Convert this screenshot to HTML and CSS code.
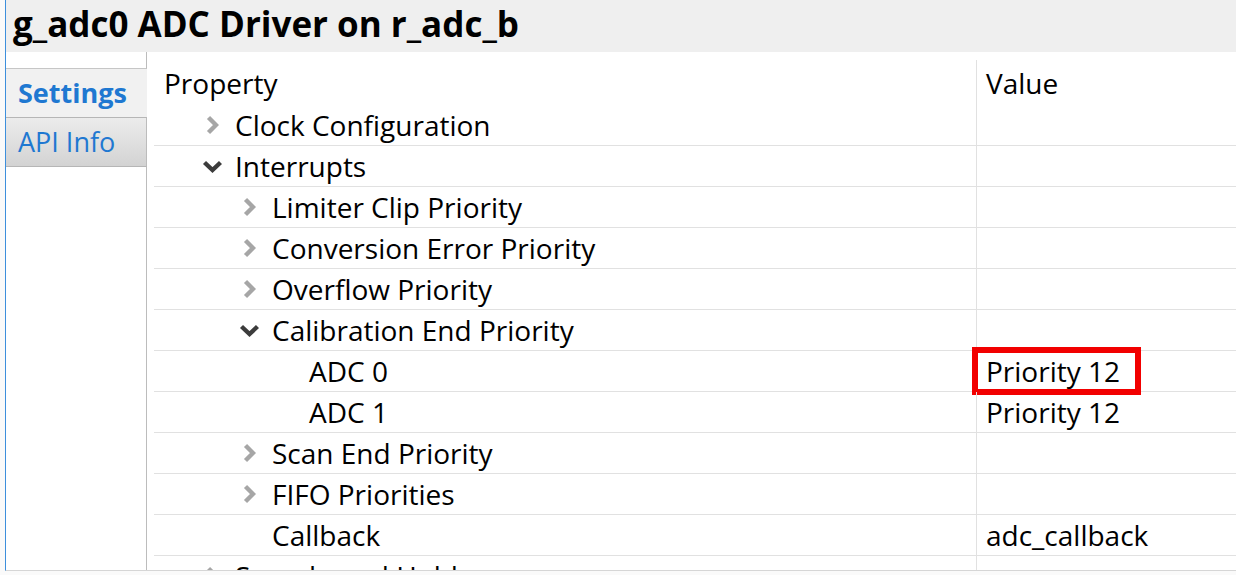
FILE: index.html
```html
<!DOCTYPE html>
<html>
<head>
<meta charset="utf-8">
<link rel="stylesheet" href="styles.css">
</head>
<body>
<div class="window">
  <div class="title">g_adc0 ADC Driver on r_adc_b</div>
  <div class="main">
    <nav class="tabs">
      <div class="tab-gap"></div>
      <div class="tab active">Settings</div>
      <div class="tab">API Info</div>
      <div class="tab-fill"></div>
    </nav>
    <div class="grid">
      <div class="row head"><div class="cell prop hdr">Property</div><div class="cell val">Value</div></div>
      <div class="row"><div class="cell prop l1"><span class="twist"><svg class="chev-r" width="13" height="20" viewBox="0 0 13 20"><polyline points="2.5,2.5 10,10 2.5,17.5"/></svg></span>Clock Configuration</div><div class="cell val"></div></div>
      <div class="row"><div class="cell prop l1"><span class="twist"><svg class="chev-d" width="21" height="13" viewBox="0 0 21 13"><polyline points="2.5,2.5 10.5,10 18.5,2.5"/></svg></span>Interrupts</div><div class="cell val"></div></div>
      <div class="row"><div class="cell prop l2"><span class="twist"><svg class="chev-r" width="13" height="20" viewBox="0 0 13 20"><polyline points="2.5,2.5 10,10 2.5,17.5"/></svg></span>Limiter Clip Priority</div><div class="cell val"></div></div>
      <div class="row"><div class="cell prop l2"><span class="twist"><svg class="chev-r" width="13" height="20" viewBox="0 0 13 20"><polyline points="2.5,2.5 10,10 2.5,17.5"/></svg></span>Conversion Error Priority</div><div class="cell val"></div></div>
      <div class="row"><div class="cell prop l2"><span class="twist"><svg class="chev-r" width="13" height="20" viewBox="0 0 13 20"><polyline points="2.5,2.5 10,10 2.5,17.5"/></svg></span>Overflow Priority</div><div class="cell val"></div></div>
      <div class="row"><div class="cell prop l2"><span class="twist"><svg class="chev-d" width="21" height="13" viewBox="0 0 21 13"><polyline points="2.5,2.5 10.5,10 18.5,2.5"/></svg></span>Calibration End Priority</div><div class="cell val"></div></div>
      <div class="row"><div class="cell prop l3"><span class="twist"></span>ADC 0</div><div class="cell val">Priority 12<span class="mark"></span></div></div>
      <div class="row"><div class="cell prop l3"><span class="twist"></span>ADC 1</div><div class="cell val">Priority 12</div></div>
      <div class="row"><div class="cell prop l2"><span class="twist"><svg class="chev-r" width="13" height="20" viewBox="0 0 13 20"><polyline points="2.5,2.5 10,10 2.5,17.5"/></svg></span>Scan End Priority</div><div class="cell val"></div></div>
      <div class="row"><div class="cell prop l2"><span class="twist"><svg class="chev-r" width="13" height="20" viewBox="0 0 13 20"><polyline points="2.5,2.5 10,10 2.5,17.5"/></svg></span>FIFO Priorities</div><div class="cell val"></div></div>
      <div class="row"><div class="cell prop l2"><span class="twist"></span>Callback</div><div class="cell val">adc_callback</div></div>
      <div class="row"><div class="cell prop l1"><span class="twist"><svg class="chev-r" width="13" height="20" viewBox="0 0 13 20"><polyline points="2.5,2.5 10,10 2.5,17.5"/></svg></span>Sample and Hold</div><div class="cell val"></div></div>
    </div>
  </div>
</div>
</body>
</html>
```

FILE: styles.css
```css
html, body {
  margin: 0;
  padding: 0;
}
body {
  width: 1236px;
  height: 575px;
  overflow: hidden;
  background: #fafafa;
  font-family: "Open Sans", "Noto Sans", sans-serif;
  color: #000;
}
.window {
  margin-left: 5px;
  height: 571px;
  box-sizing: border-box;
  border-left: 1px solid #3d8fdc;
  border-bottom: 1px solid #d6d6d6;
  background: #fff;
  display: flex;
  flex-direction: column;
}
.title {
  height: 52px;
  flex-shrink: 0;
  background: #efefef;
  padding-left: 7px;
  font-weight: 700;
  font-size: 35px;
  line-height: 47px;
  white-space: nowrap;
}
.main {
  flex: 1;
  min-height: 0;
  display: flex;
  overflow: hidden;
}
.tabs {
  width: 141px;
  flex-shrink: 0;
  display: flex;
  flex-direction: column;
}
.tab-gap {
  height: 17px;
  box-sizing: border-box;
  border-bottom: 1px solid #c6c6c6;
  border-right: 1px solid #bcbcbc;
}
.tab {
  height: 50px;
  box-sizing: border-box;
  padding-left: 12px;
  font-size: 27px;
  line-height: 47px;
  color: #1f78d1;
  background: linear-gradient(#ececec, #d3d3d3);
  border-top: 1px solid #b6b6b6;
  border-bottom: 1px solid #b6b6b6;
  border-right: 1px solid #bcbcbc;
  white-space: nowrap;
}
.tab.active {
  height: 48px;
  line-height: 47px;
  font-weight: 700;
  background: #f1f1f1;
  border: none;
}
.tab-fill {
  flex: 1;
  border-right: 1px solid #bcbcbc;
}
.grid {
  flex: 1;
  padding: 8px 0 0 7px;
  display: flex;
  flex-direction: column;
}
.row {
  flex-shrink: 0;
  display: grid;
  grid-template-columns: 822px 1fr;
  height: 41px;
  box-sizing: border-box;
  border-bottom: 1px solid #e1e1e1;
}
.row.head {
  height: 45px;
  border-bottom: none;
}
.cell {
  display: flex;
  align-items: center;
  font-size: 28px;
  white-space: nowrap;
}
.hdr {
  padding-left: 10px;
}
.val {
  position: relative;
  border-left: 1px solid #e1e1e1;
  padding-left: 9px;
}
.twist {
  width: 45px;
  flex-shrink: 0;
  display: flex;
  justify-content: center;
  align-items: center;
}
.l1 { padding-left: 36px; }
.l2 { padding-left: 73px; }
.l3 { padding-left: 110px; }
.chev-r polyline {
  fill: none;
  stroke: #a6a6a6;
  stroke-width: 4.4;
}
.chev-d polyline {
  fill: none;
  stroke: #3c3c3c;
  stroke-width: 4.4;
}
.mark {
  position: absolute;
  left: -5px;
  top: -4px;
  width: 169px;
  height: 48px;
  box-sizing: border-box;
  border: 6px solid #f20000;
}
```
